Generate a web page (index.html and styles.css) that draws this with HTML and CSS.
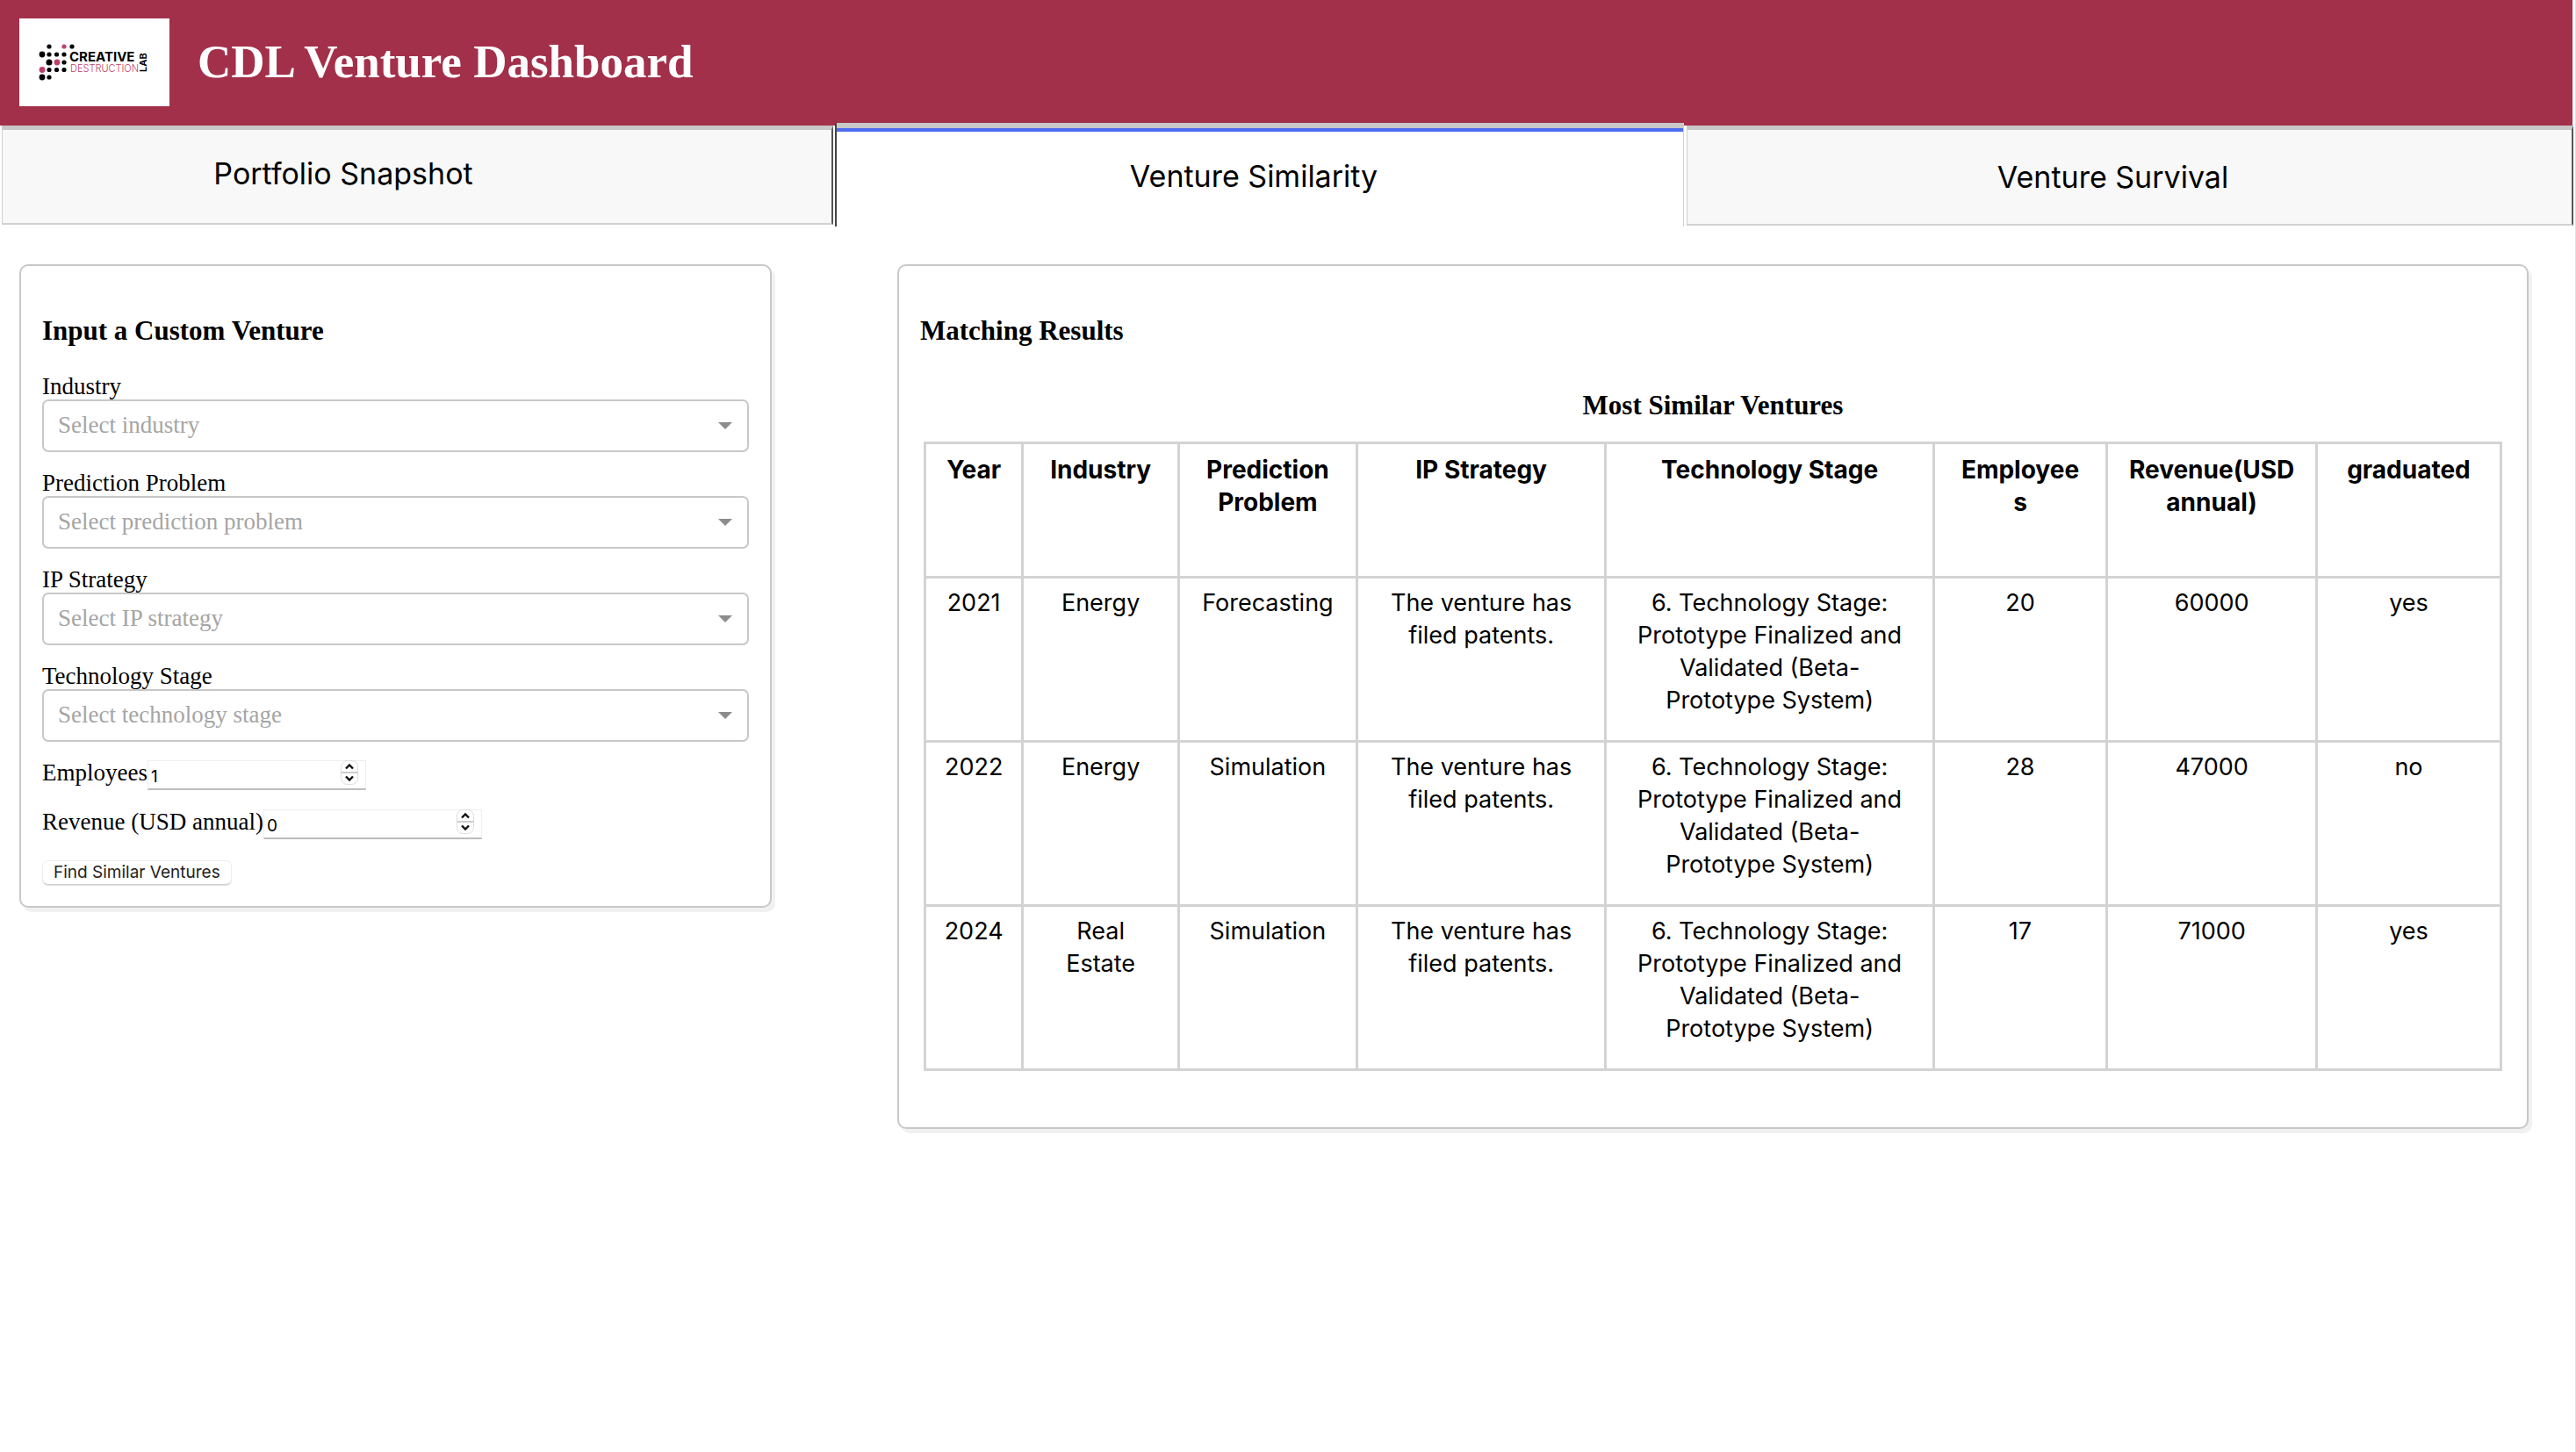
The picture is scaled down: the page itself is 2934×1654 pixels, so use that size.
FILE: index.html
```html
<!DOCTYPE html>
<html lang="en">
<head>
<meta charset="utf-8">
<meta name="viewport" content="width=device-width, initial-scale=1">
<title>CDL Venture Dashboard</title>
<link rel="stylesheet" href="styles.css">
</head>
<body>
<header class="header">
  <svg class="logo" width="171" height="100" viewBox="0 0 171 100" role="img" aria-label="Creative Destruction Lab">
    <rect width="171" height="100" fill="#fff"/>
    <g fill="#000">
      <circle cx="34" cy="32" r="2.6"/><circle cx="60" cy="32" r="2.6"/>
      <circle cx="26" cy="41" r="3.4"/><circle cx="34" cy="41" r="2.6"/><circle cx="42.500" cy="41" r="2.6"/><circle cx="51" cy="41" r="2.6"/>
      <circle cx="34" cy="50" r="3.500"/><circle cx="51" cy="50" r="2.6"/>
      <circle cx="34" cy="58.500" r="2.6"/><circle cx="42.500" cy="58.500" r="2.6"/><circle cx="51" cy="58.500" r="2.6"/>
      <circle cx="26" cy="67" r="3.4"/><circle cx="34" cy="67" r="2.6"/>
    </g>
    <g fill="#c0406a">
      <circle cx="51" cy="32" r="2.6"/><circle cx="43" cy="50" r="3.4"/><circle cx="26" cy="58.500" r="3.4"/>
    </g>
    <text class="logo-bold" x="57" y="49">CREATIVE</text>
    <text class="logo-light" x="58" y="61">DESTRUCTION</text>
    <text class="logo-lab" transform="translate(145 61) rotate(-90)">LAB</text>
  </svg>
  <h1 class="title">CDL Venture Dashboard</h1>
</header>

<nav class="tabs">
  <a class="tab tab-first" href="#portfolio">Portfolio Snapshot</a>
  <a class="tab tab-active" href="#similarity" aria-current="page">Venture Similarity</a>
  <a class="tab tab-last" href="#survival">Venture Survival</a>
</nav>

<main class="content">
  <form class="panel form">
    <h2 class="heading">Input a Custom Venture</h2>
    <div class="field">
      <label for="industry">Industry</label>
      <div class="select"><select id="industry"><option>Select industry</option></select></div>
    </div>
    <div class="field">
      <label for="problem">Prediction Problem</label>
      <div class="select"><select id="problem"><option>Select prediction problem</option></select></div>
    </div>
    <div class="field">
      <label for="ip">IP Strategy</label>
      <div class="select"><select id="ip"><option>Select IP strategy</option></select></div>
    </div>
    <div class="field">
      <label for="stage">Technology Stage</label>
      <div class="select"><select id="stage"><option>Select technology stage</option></select></div>
    </div>
    <div class="number-row">
      <label for="employees">Employees</label>
      <div class="number">
        <input id="employees" type="number" value="1">
        <svg class="spinner" width="20" height="28" viewBox="0 0 20 28" aria-hidden="true"><rect x=".5" y=".5" width="19" height="27" rx="7" fill="#fff" stroke="#ddd"/><path d="M1 14h18" stroke="#ccc" stroke-width="2"/><path d="M6 9.500l4-4 4 4M6 18.500l4 4 4-4" fill="none" stroke="#111" stroke-width="2.400"/></svg>
      </div>
    </div>
    <div class="number-row">
      <label for="revenue">Revenue (USD annual)</label>
      <div class="number">
        <input id="revenue" type="number" value="0">
        <svg class="spinner" width="20" height="28" viewBox="0 0 20 28" aria-hidden="true"><rect x=".5" y=".5" width="19" height="27" rx="7" fill="#fff" stroke="#ddd"/><path d="M1 14h18" stroke="#ccc" stroke-width="2"/><path d="M6 9.500l4-4 4 4M6 18.500l4 4 4-4" fill="none" stroke="#111" stroke-width="2.400"/></svg>
      </div>
    </div>
    <button class="submit" type="button">Find Similar Ventures</button>
  </form>

  <section class="panel results">
    <h2 class="heading">Matching Results</h2>
    <table class="ventures">
      <caption>Most Similar Ventures</caption>
      <colgroup>
        <col class="c-year"><col class="c-industry"><col class="c-problem"><col class="c-ip"><col class="c-stage"><col class="c-employees"><col class="c-revenue"><col class="c-graduated">
      </colgroup>
      <thead>
        <tr><th>Year</th><th>Industry</th><th>Prediction Problem</th><th>IP Strategy</th><th>Technology Stage</th><th>Employee<br>s</th><th>Revenue(USD annual)</th><th>graduated</th></tr>
      </thead>
      <tbody>
        <tr><td>2021</td><td>Energy</td><td>Forecasting</td><td>The venture has filed patents.</td><td>6. Technology Stage: Prototype Finalized and Validated (Beta-<br>Prototype System)</td><td>20</td><td>60000</td><td>yes</td></tr>
        <tr><td>2022</td><td>Energy</td><td>Simulation</td><td>The venture has filed patents.</td><td>6. Technology Stage: Prototype Finalized and Validated (Beta-<br>Prototype System)</td><td>28</td><td>47000</td><td>no</td></tr>
        <tr><td>2024</td><td>Real Estate</td><td>Simulation</td><td>The venture has filed patents.</td><td>6. Technology Stage: Prototype Finalized and Validated (Beta-<br>Prototype System)</td><td>17</td><td>71000</td><td>yes</td></tr>
      </tbody>
    </table>
  </section>
</main>
</body>
</html>
```
FILE: styles.css
```css
* { box-sizing: border-box; }

body {
  margin: 0;
  min-height: 100vh;
  border-right: 1px solid #e2e2e2;
  background: #fff;
  color: #000;
  font: 27px/30px "Liberation Serif", "Times New Roman", serif;
}

.header {
  display: flex;
  align-items: flex-start;
  gap: 32px;
  height: 143px;
  margin-right: 3px;
  padding: 21px 22px;
  background: #a3304a;
}

.logo { flex: none; font-family: Inter, sans-serif; }
.logo-bold { font-size: 15px; font-weight: 700; }
.logo-light { font-size: 11px; font-weight: 300; fill: #c0406a; }
.logo-lab { font-size: 11px; font-weight: 700; }

.title {
  margin: 0;
  color: #fff;
  font-size: 53px;
  line-height: 98px;
}

.tabs {
  display: grid;
  grid-template-columns: 951fr 970fr 1010fr;
  margin-right: 2px;
  font: 34px/40px Inter, sans-serif;
}

.tab {
  display: flex;
  align-items: center;
  justify-content: center;
  height: 113px;
  border: 1px solid #d2d2d2;
  border-top: 5px solid #c8c8c8;
  border-bottom-width: 2px;
  background: #f8f8f8;
  color: #000;
  text-decoration: none;
}

.tab-first {
  margin-left: 2px;
  padding-right: 168px;
  padding-bottom: 6px;
  border-right: 2px solid #555;
  margin-right: 2px;
}

.tab-active {
  height: 118px;
  margin-top: -3px;
  margin-right: 3px;
  padding-top: 4px;
  padding-right: 14px;
  border: 0;
  border-left: 2px solid #444;
  border-right: 1px solid #d2d2d2;
  background: linear-gradient(#c8c8c8 6px, #4c6bf0 6px, #4c6bf0 10px, #fff 10px);
}

.tab-last {
  height: 114px;
  padding-right: 38px;
  border-right: 2px solid #555;
}

.content {
  display: grid;
  grid-template-columns: 857fr 1858fr;
  align-items: start;
  column-gap: 143px;
  padding: 43px 53px 43px 22px;
}

.panel {
  border: 2px solid #c8c8c8;
  border-radius: 10px;
  padding: 56px 24px 24px;
  box-shadow: 4px 5px 0 #f1f1f1;
}

.heading {
  margin: 0;
  font-size: 31px;
  line-height: 36px;
}

.form {
  display: flex;
  flex-direction: column;
  gap: 20px;
}

.form .heading { margin-bottom: 10px; }
.field { display: grid; }
.select { display: grid; align-items: center; }

.select select {
  grid-area: 1 / 1;
  appearance: none;
  width: 100%;
  height: 60px;
  padding: 0 48px 3px 16px;
  border: 2px solid #c8c8c8;
  border-radius: 7px;
  background: #fff;
  color: #a5a5a5;
  font: inherit;
}

.select::after {
  content: "";
  grid-area: 1 / 1;
  justify-self: end;
  margin-right: 19px;
  border: 8px solid transparent;
  border-top-color: #8c8c8c;
  border-bottom-width: 0;
}

.number-row {
  display: flex;
  height: 36px;
}

.number {
  display: grid;
  align-self: center;
}

.number input {
  grid-area: 1 / 1;
  appearance: textfield;
  width: 249px;
  height: 34px;
  padding: 3px 32px 0 3px;
  border: 1px solid #eee;
  border-bottom: 2px solid #bcbcbc;
  background: #fff;
  font: 19px/24px Inter, sans-serif;
}

.number input::-webkit-inner-spin-button { appearance: none; }

.spinner {
  grid-area: 1 / 1;
  justify-self: end;
  margin-right: 9px;
}

.submit {
  align-self: flex-start;
  height: 28px;
  margin-top: 3px;
  padding: 0 12px;
  border: 1px solid #eee;
  border-bottom-color: #d0d0d0;
  border-radius: 7px;
  background: #fff;
  box-shadow: 0 1px 1px #ddd;
  color: #222;
  font: 19px/24px Inter, sans-serif;
}

.results { padding-bottom: 64px; }

.ventures {
  width: calc(100% - 8px);
  margin: 49px 4px 0;
  border-collapse: collapse;
  table-layout: fixed;
  font: 27px/37px Inter, sans-serif;
}

.ventures caption {
  margin-bottom: 23px;
  font: bold 31px/36px "Liberation Serif", "Times New Roman", serif;
}

.ventures th,
.ventures td {
  height: 187px;
  padding: 9px 20px;
  border: 3px solid #d3d3d3;
  text-align: center;
  vertical-align: top;
}

.ventures th {
  height: 153px;
  padding: 11px 8px;
  font-size: 28px;
}

.c-year { width: 6.2%; }
.c-industry { width: 9.9%; }
.c-problem { width: 11.3%; }
.c-ip { width: 15.8%; }
.c-stage { width: 20.8%; }
.c-employees { width: 11%; }
.c-revenue { width: 13.3%; }
.c-graduated { width: 11.7%; }
```
